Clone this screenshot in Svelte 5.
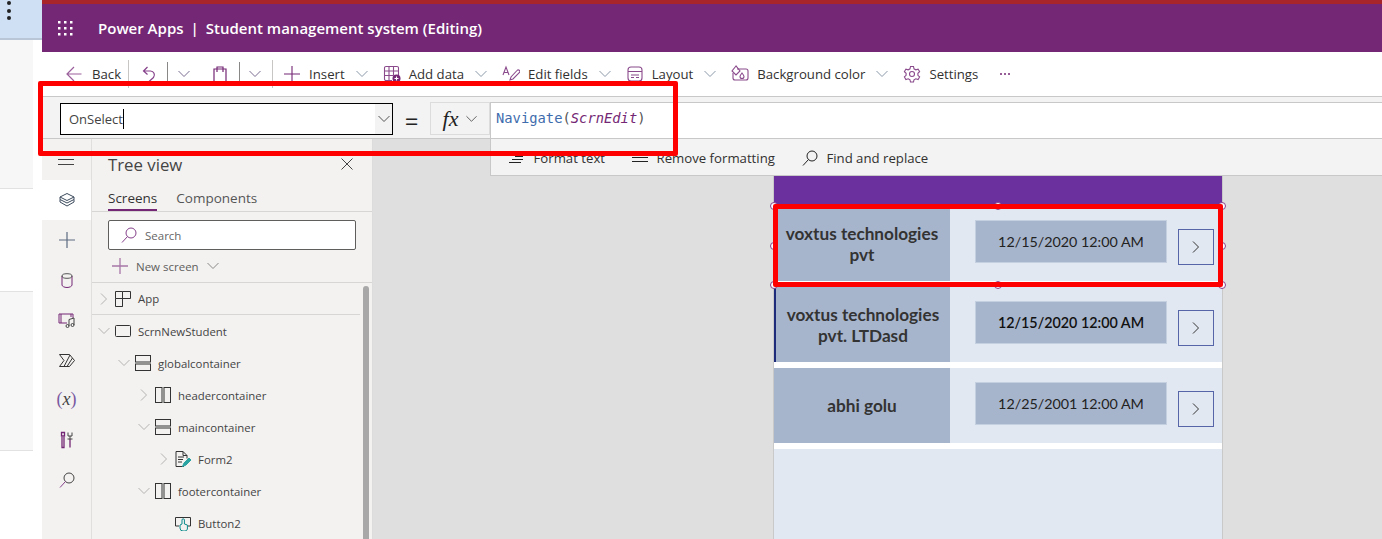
<script>
  const tools = [
    { id: "insert", label: "Insert", chev: true },
    { id: "data", label: "Add data", chev: true },
    { id: "fields", label: "Edit fields", chev: true },
    { id: "layout", label: "Layout", chev: true },
    { id: "bg", label: "Background color", chev: true },
    { id: "gear", label: "Settings", chev: false },
  ];

  const railIcons = ["layers", "plus", "db", "media", "flow", "var", "tools", "search"];

  const tree = [
    { name: "App", depth: 0, open: false, icon: "app", line: true },
    { name: "ScrnNewStudent", depth: 0, open: true, icon: "screen" },
    { name: "globalcontainer", depth: 1, open: true, icon: "rows" },
    { name: "headercontainer", depth: 2, open: false, icon: "cols" },
    { name: "maincontainer", depth: 2, open: true, icon: "rows" },
    { name: "Form2", depth: 3, open: false, icon: "form" },
    { name: "footercontainer", depth: 2, open: true, icon: "cols" },
    { name: "Button2", depth: 3, open: null, icon: "button" },
  ];

  const rows = [
    { name: ["voxtus technologies", "pvt"], date: "12/15/2020 12:00 AM" },
    { name: ["voxtus technologies", "pvt. LTDasd"], date: "12/15/2020 12:00 AM", current: true },
    { name: ["abhi golu"], date: "12/25/2001 12:00 AM" },
  ];

  const handles = [
    [0, 0], [50, 0], [100, 0], [0, 50], [100, 50], [0, 100], [50, 100], [100, 100],
  ];
</script>

{#snippet chevron(cls = "chev")}
  <svg class={cls} width="12" height="8" viewBox="0 0 12 8"><path d="M.5 1 6 6.5 11.500 1" fill="none" stroke="currentColor" /></svg>
{/snippet}

<div class="page">
  <aside class="strip">
    <div class="strip-top">
      <i></i><i></i><i></i>
    </div>
    <div class="strip-rows">
      <div class="s1"></div>
      <div class="s2"></div>
      <div class="s3"></div>
      <div class="s4"></div>
    </div>
  </aside>

  <div class="app">
    <header class="header">
      <svg width="16" height="16" viewBox="0 0 16 16" fill="#fff">
        {#each [1, 7, 13] as y}
          {#each [1, 7, 13] as x}
            <rect {x} {y} width="2.500" height="2.500" />
          {/each}
        {/each}
      </svg>
      <span class="title">Power Apps</span>
      <span class="pipe">|</span>
      <span class="title">Student management system (Editing)</span>
    </header>

    <div class="toolbar">
      <svg class="arrow" width="16" height="16" viewBox="0 0 16 16"><path d="M15.500 8H1M8 1 1 8l7 7" fill="none" stroke="#9b5f9b" stroke-width="1.200" /></svg>
      <span class="back">Back</span>
      <span class="sep tall first"></span>
      <svg class="undo" width="14" height="16" viewBox="0 0 14 16"><path d="M5.500 1 1.500 5l4 3.500M1.500 5h7a4 4 0 0 1 3 6.500L7 15.500" fill="none" stroke="#85408a" stroke-width="1.200" /></svg>
      <span class="sep"></span>
      {@render chevron("chev small")}
      <svg class="clip" width="14" height="18" viewBox="0 0 14 18"><path d="M1 17V4h12v13M4 4V7M10 4V7M4 4V2h6v2" fill="none" stroke="#742774" stroke-width="1.200" /></svg>
      <span class="sep"></span>
      {@render chevron("chev small")}
      <span class="sep tall last"></span>

      {#each tools as t}
        <div class="tool">
          <svg width="18" height="18" viewBox="0 0 18 18" fill="none" stroke="#8a4a8c" stroke-width="1.100">
            {#if t.id === "insert"}
              <path d="M9 1v16M1 9h16" stroke="#742774" />
            {:else if t.id === "data"}
              <path d="M3 1.500h11a1.500 1.500 0 0 1 1.500 1.500v7M9 15.500H3A1.500 1.500 0 0 1 1.500 14V3A1.500 1.500 0 0 1 3 1.500M1.500 6h14M1.500 10.500h9M6 1.500v14M10.500 1.500v9" />
              <circle cx="13.500" cy="13.500" r="4" fill="#742774" stroke="none" />
              <path d="M13.500 11.500v4M11.500 13.500h4" stroke="#fff" />
            {:else if t.id === "fields"}
              <path d="M1 10 4 2l3 8M2 7.500h4M8 15l1-3 6-6.500a1.500 1.500 0 0 1 2.500 2L11 14Z" />
            {:else if t.id === "layout"}
              <rect x="2" y="2" width="14" height="14" rx="3" />
              <path d="M2 6.500h14M5 10h8M5 12.500h3M10 12.500h3" />
            {:else if t.id === "bg"}
              <path d="M6 4h9a2 2 0 0 1 2 2v7a2 2 0 0 1-2 2H4a2 2 0 0 1-2-2V8" />
              <path d="M5 1 1 6l4 4 4-4ZM11 8s-2 2.500-2 3.500a2 2 0 0 0 4 0C13 10.500 11 8 11 8Z" />
            {:else}
              <path d="M7.500 1.500h3l.5 2.300 1.800 1 2.300-.7 1.500 2.600-1.700 1.600v2l1.700 1.600-1.500 2.600-2.300-.7-1.800 1-.5 2.200h-3l-.5-2.200-1.800-1-2.300.7-1.500-2.600 1.700-1.600v-2L1.400 6.700l1.500-2.600 2.300.7 1.800-1Z" />
              <circle cx="9" cy="9" r="2.500" />
            {/if}
          </svg>
          <span class="tool-label">{t.label}</span>
          {#if t.chev}{@render chevron()}{/if}
        </div>
      {/each}
      <span class="more"><i></i><i></i><i></i></span>
    </div>

    <div class="formula">
      <div class="prop-box">
        <span class="prop-value">OnSelect</span><span class="caret"></span>
        <span class="prop-drop">{@render chevron("chev dark")}</span>
      </div>
      <span class="equals">=</span>
      <div class="fx">
        <span class="fx-mark">fx</span>
        {@render chevron("chev dark")}
      </div>
      <div class="expr"><span class="fn">Navigate</span><span class="paren">(</span><span class="arg">ScrnEdit</span><span class="paren">)</span></div>
    </div>

    <div class="workspace">
      <nav class="rail">
        <svg class="burger" width="16" height="11" viewBox="0 0 16 11"><path d="M0 .5h16M0 5.500h16M0 10.500h16" stroke="#444" /></svg>
        {#each railIcons as ic, i}
          <div class="rail-item" class:active={i === 0}>
            {#if ic === "layers"}
              <svg width="16" height="16" viewBox="0 0 16 16" fill="none" stroke="#3c4a5c"><path d="M8 1.500 15 5l-7 3.500L1 5ZM1 5v2.500l7 3.500 7-3.500V5M1 7.500V10l7 4 7-4V7.500" /></svg>
            {:else if ic === "plus"}
              <svg width="16" height="16" viewBox="0 0 16 16"><path d="M8 0v16M0 8h16" stroke="#5c6a80" stroke-width="1.200" /></svg>
            {:else if ic === "db"}
              <svg width="12" height="15" viewBox="0 0 12 15" fill="none" stroke="#742774"><path d="M1 3v9c0 1.200 2.200 2.500 5 2.500s5-1.300 5-2.500V3" /><ellipse cx="6" cy="3" rx="5" ry="2.300" stroke="#555" /></svg>
            {:else if ic === "media"}
              <svg width="17" height="15" viewBox="0 0 17 15" fill="none" stroke="#444"><path d="M1 1h14v4M9 10H1V1M3 1v9M13 1v3" stroke="#742774" /><path d="M11 13V6.500l5-1.500v7" /><circle cx="9.500" cy="13" r="1.500" /><circle cx="14.500" cy="12" r="1.500" /></svg>
            {:else if ic === "flow"}
              <svg width="16" height="13" viewBox="0 0 16 13" fill="none" stroke="#333"><path d="M.5.500h10L15.500 6.500 10.500 12.500H.5L5 6.500ZM5 12.500 11 1M8 12.500 13.500 4" /></svg>
            {:else if ic === "var"}
              <span class="var">(<em>x</em>)</span>
            {:else if ic === "tools"}
              <svg width="14" height="18" viewBox="0 0 14 18" fill="none" stroke="#742774"><path d="M2 6V16.500h2V6M1.500 1.500h3V5h-3ZM10 8v8.500" stroke-width="1.300" /><path d="M8 1.500V5h4V1.500M10 5v3M7.500 8h5" stroke="#444" /></svg>
            {:else}
              <svg width="16" height="16" viewBox="0 0 16 16" fill="none"><circle cx="10" cy="6" r="5" stroke="#444" /><path d="M6.500 9.500 1 15.500" stroke="#85408a" /></svg>
            {/if}
          </div>
        {/each}
      </nav>

      <section class="tree">
        <div class="tree-head">
          <h2>Tree view</h2>
          <svg width="12" height="12" viewBox="0 0 12 12"><path d="M.5.500l11 11M11.500.500l-11 11" stroke="#444" /></svg>
        </div>
        <div class="tabs">
          <span class="tab on">Screens</span>
          <span class="tab">Components</span>
        </div>
        <div class="search">
          <svg width="16" height="16" viewBox="0 0 16 16" fill="none"><circle cx="10" cy="6" r="5" stroke="#85408a" /><path d="M6.500 9.500 1 15.500" stroke="#85408a" /></svg>
          <span>Search</span>
        </div>
        <div class="new-screen">
          <svg width="16" height="16" viewBox="0 0 16 16"><path d="M8 0v16M0 8h16" stroke="#a877a8" stroke-width="1.300" /></svg>
          <span>New screen</span>
          {@render chevron("chev grey")}
        </div>
        <div class="tree-list">
          {#each tree as node}
            <div class="node depth{node.depth}" class:line={node.line}>
              <span class="twist">
                {#if node.open === true}
                  {@render chevron("chev pale")}
                {:else if node.open === false}
                  <svg width="8" height="12" viewBox="0 0 8 12"><path d="M1 .5 6.500 6 1 11.500" fill="none" stroke="#b5b3b1" /></svg>
                {/if}
              </span>
              <svg class="node-icon" width="16" height="16" viewBox="0 0 16 16" fill="none" stroke="#333">
                {#if node.icon === "app"}
                  <path d="M.5 7.500h7V15.500H.5ZM7.500.5h8v7h-8ZM.5 7.500v-7h7M7.500 15.500V7.500" />
                {:else if node.icon === "screen"}
                  <rect x=".5" y="2.500" width="15" height="11" rx="1" />
                {:else if node.icon === "rows"}
                  <rect x=".5" y=".5" width="15" height="6.500" /><rect x=".5" y="9" width="15" height="6.500" />
                {:else if node.icon === "cols"}
                  <rect x=".5" y=".5" width="6.500" height="15" /><rect x="9" y=".5" width="6.500" height="15" />
                {:else if node.icon === "form"}
                  <path d="M9 15.500H1V.5h7l4 4v3M8 .5v4h4M3 6h6M3 8.500h5M3 11h4" />
                  <path d="M7.500 15.500 9 12l5-5 2 2-5 5Z" fill="#2aa3a3" stroke="#2aa3a3" />
                {:else}
                  <path d="M4 11H.5V2.500h15V11H13" />
                  <path d="M7 9V5a1.200 1.200 0 0 1 2.400 0v4l3 1v4a2.500 2.500 0 0 1-2.500 2H8a3 3 0 0 1-3-3v-3Z" stroke="#0b8a8a" fill="#f3f2f1" />
                {/if}
              </svg>
              <span class="node-name">{node.name}</span>
            </div>
          {/each}
          <div class="scroll-thumb"></div>
        </div>
      </section>

      <main class="canvas">
        <div class="format-bar">
          <div class="fmt">
            <svg width="16" height="12" viewBox="0 0 16 12"><path d="M3 1.500h13M6 4.500h8M3 7.500h11M0 10.500h12" stroke="#222" /></svg>
            <span>Format text</span>
          </div>
          <div class="fmt">
            <svg width="16" height="12" viewBox="0 0 16 12"><path d="M0 1.500h16M0 5.500h16M0 9.500h16" stroke="#222" /></svg>
            <span>Remove formatting</span>
          </div>
          <div class="fmt">
            <svg width="16" height="16" viewBox="0 0 16 16" fill="none"><circle cx="10" cy="6" r="5" stroke="#222" /><path d="M6.500 9.500 1 15.500" stroke="#222" /></svg>
            <span>Find and replace</span>
          </div>
        </div>

        <div class="screen">
          <div class="band"></div>
          <div class="gallery">
            {#each rows as r}
              <div class="row" class:current={r.current}>
                <div class="name">
                  {#each r.name as line}<span>{line}</span>{/each}
                </div>
                <div class="date">{r.date}</div>
                <div class="go">
                  <svg width="8" height="12" viewBox="0 0 8 12"><path d="M1 .5 6.500 6 1 11.500" fill="none" stroke="#333" /></svg>
                </div>
              </div>
            {/each}
            <div class="handles">
              {#each handles as [x, y]}
                <i style="left:{x}%;top:{y}%"></i>
              {/each}
            </div>
          </div>
        </div>
      </main>
    </div>
  </div>

  <div class="mark mark-formula"></div>
  <div class="mark mark-row"></div>
</div>

<style>
  :global(body) {
    margin: 0;
    background: #fff;
  }
  .page {
    position: relative;
    display: flex;
    width: 1382px;
    height: 539px;
    overflow: hidden;
    font-family: "Open Sans", "Noto Sans", sans-serif;
    font-size: 12.500px;
    color: #3b3a39;
  }

  /* host page behind the studio */
  .strip {
    width: 42px;
    flex: none;
  }
  .strip-top {
    height: 38px;
    background: #cfe0f5;
    border-bottom: 2px solid #b9c6d8;
    position: relative;
  }
  .strip-top i {
    display: block;
    width: 4px;
    height: 4px;
    border-radius: 50%;
    background: #222;
    margin-left: 7px;
    margin-bottom: 3.500px;
    position: relative;
    top: 1px;
  }
  .strip-rows {
    width: 33px;
  }
  .strip-rows div {
    border-bottom: 1px solid #e2e2e2;
  }
  .s1 { height: 148px; background: #f7f7f7; }
  .s2 { height: 102px; background: #fff; }
  .s3 { height: 158px; background: #f7f7f7; }
  .s4 { height: 88px; background: #fff; border: 0 !important; }

  .app {
    flex: 1;
    display: flex;
    flex-direction: column;
    min-width: 0;
  }
  .header {
    height: 48px;
    box-sizing: content-box;
    border-top: 4px solid #a8262a;
    background: #742774;
    color: #fff;
    display: flex;
    align-items: center;
    padding-left: 15px;
    font-size: 15px;
  }
  .header svg {
    margin-right: 25px;
  }
  .title {
    font-weight: 600;
  }
  .pipe {
    margin: 0 7px;
    font-weight: 600;
  }

  .toolbar {
    height: 44px;
    background: #fff;
    display: flex;
    align-items: center;
    padding-left: 24px;
    font-size: 13.200px;
    color: #323130;
  }
  .back { margin-left: 10px; }
  .undo { margin-left: 4px; }
  .sep {
    width: 1px;
    height: 24px;
    background: #8a8886;
    margin: 0 9px;
  }
  .sep.tall {
    height: 28px;
    background: #c8c6c4;
  }
  .sep.first { margin-left: 7px; }
  .sep.last { margin-right: 10px; margin-left: 11px; }
  .undo + .sep { margin-left: 11px; margin-right: 10px; }
  .clip { margin-left: 23px; margin-right: 3px; }
  .tool {
    display: flex;
    align-items: center;
    gap: 8px;
    margin-right: 15px;
  }
  .tool .chev { margin-left: 3px; }
  .chev {
    color: #8a98a8;
    flex: none;
  }
  .chev.small { color: #7a6a90; }
  .chev.dark { color: #555; }
  .chev.grey { color: #8a8886; }
  .chev.pale { color: #b5b3b1; }
  .more {
    display: flex;
    gap: 2px;
    margin-left: 7px;
  }
  .more i {
    width: 2px;
    height: 2px;
    background: #742774;
    border-radius: 50%;
  }

  .formula {
    height: 41px;
    background: #f3f3f3;
    border-top: 1px solid #c8c8c8;
    border-bottom: 1px solid #c8c8c8;
    box-sizing: content-box;
    display: flex;
    position: relative;
    align-items: flex-start;
  }
  .prop-box {
    margin: 6px 0 0 18px;
    width: 323px;
    height: 30px;
    border: 1px solid #000;
    background: #fff;
    display: flex;
    align-items: center;
    padding-left: 8px;
    box-sizing: content-box;
    font-size: 13px;
    color: #444;
  }
  .caret {
    width: 1px;
    height: 20px;
    background: #000;
    margin-left: 0;
  }
  .prop-drop {
    margin-left: auto;
    width: 17px;
    height: 100%;
    background: #f3f3f3;
    display: flex;
    align-items: center;
    justify-content: center;
  }
  .equals {
    width: 37px;
    text-align: center;
    font-size: 24px;
    line-height: 20px;
    margin-top: 14px;
    color: #222;
  }
  .fx {
    width: 58px;
    height: 31px;
    margin-top: 5px;
    padding-left: 0;
    border: 1px solid #dcdcdc;
    box-sizing: content-box;
    display: flex;
    align-items: center;
    justify-content: center;
    gap: 8px;
  }
  .fx .chev { width: 11px; }
  .fx-mark {
    font-family: "Liberation Serif", serif;
    font-style: italic;
    font-size: 22px;
    color: #222;
  }
  .expr {
    flex: 1;
    height: 35px;
    margin-top: 5px;
    background: #fff;
    border-top: 1px solid #c8c8c8;
    border-left: 1px solid #c8c8c8;
    line-height: 31px;
    padding-left: 5px;
    font-family: "DejaVu Sans Mono", monospace;
    font-size: 13.800px;
  }
  .fn { color: #3f6cad; }
  .paren { color: #555; }
  .arg { color: #742774; font-style: italic; }

  .workspace {
    flex: 1;
    display: flex;
    min-height: 0;
  }
  .rail {
    width: 49px;
    flex: none;
    background: #f3f2f1;
    border-right: 1px solid #e1dfdd;
    display: flex;
    flex-direction: column;
    align-items: stretch;
  }
  .burger {
    display: block;
    margin: 15px 0 15px 16px;
  }
  .rail-item {
    height: 40px;
    display: flex;
    align-items: center;
    justify-content: center;
    flex: none;
  }
  .rail-item.active { background: #fff; }
  .var {
    font-family: "Liberation Serif", serif;
    font-size: 18px;
    line-height: 18px;
    margin-top: -2px;
    color: #7a5aa0;
  }
  .var em { color: #444; }

  .tree {
    width: 280px;
    flex: none;
    background: #f3f2f1;
    border-right: 1px solid #dcdcdc;
    display: flex;
    flex-direction: column;
  }
  .tree-head {
    display: flex;
    align-items: center;
    justify-content: space-between;
    padding: 13px 19px 0 16px;
    height: 24px;
  }
  h2 {
    margin: 0;
    font-size: 16.800px;
    font-weight: 400;
    color: #444;
  }
  .tabs {
    display: flex;
    gap: 19px;
    padding: 14px 0 0 16px;
    height: 21px;
    border-bottom: 1px solid #d8d6d4;
    font-size: 13.500px;
  }
  .tab {
    color: #555;
    line-height: 16px;
    height: 19px;
  }
  .tab.on {
    color: #333;
    border-bottom: 2px solid #742774;
  }
  .search {
    margin: 8px 16px 0;
    height: 28px;
    border: 1px solid #605e5c;
    border-radius: 2px;
    background: #fff;
    display: flex;
    align-items: center;
    gap: 8px;
    padding-left: 12px;
    font-size: 11.500px;
    color: #666;
  }
  .new-screen {
    display: flex;
    align-items: center;
    gap: 8px;
    padding-left: 20px;
    height: 32px;
    font-size: 11.500px;
    color: #605e5c;
    border-bottom: 1px solid #d8d6d4;
  }
  .tree-list {
    position: relative;
    flex: 1;
    font-size: 11.400px;
    color: #444;
  }
  .node {
    height: 32px;
    display: flex;
    align-items: center;
    box-sizing: border-box;
    margin-right: 12px;
  }
  .node.line { border-bottom: 1px solid #d8d6d4; }
  .depth0 { padding-left: 6px; }
  .depth1 { padding-left: 26px; }
  .depth2 { padding-left: 46px; }
  .depth3 { padding-left: 66px; }
  .twist {
    width: 12px;
    flex: none;
    display: flex;
    justify-content: center;
  }
  .node-icon {
    margin: 0 7px 0 5px;
    flex: none;
  }
  .scroll-thumb {
    position: absolute;
    right: 3px;
    top: 3px;
    width: 6px;
    bottom: 0;
    border-radius: 3px 3px 0 0;
    background: #a8a8a8;
  }

  .canvas {
    flex: 1;
    background: #dfdfdf;
    display: flex;
    flex-direction: column;
    min-width: 0;
  }
  .format-bar {
    margin-left: 117px;
    height: 35px;
    padding-top: 1px;
    background: #f3f3f3;
    border-left: 1px solid #c8c8c8;
    border-bottom: 1px solid #c8c8c8;
    display: flex;
    align-items: center;
    padding-left: 18px;
    gap: 27px;
    font-size: 13.200px;
    color: #323130;
  }
  .fmt {
    display: flex;
    align-items: center;
    gap: 8.500px;
  }
  .screen {
    margin-left: 401px;
    width: 448px;
    flex: 1;
    background: #e2e8f2;
    box-shadow: 1px 0 0 #c9c9c9, -1px 0 0 #c9c9c9;
  }
  .band {
    height: 30px;
    background: #6b2f9e;
  }
  .gallery {
    position: relative;
    height: 243px;
  }
  .row {
    height: 81px;
    box-sizing: border-box;
    border-bottom: 6px solid #fff;
    display: flex;
    align-items: flex-start;
    font-family: Lato, sans-serif;
    color: #333;
  }
  .row.current .name { border-left: 2px solid #1e2a7a; }
  .row.current .date { font-weight: 600; color: #111; }
  .name {
    width: 176px;
    height: 100%;
    box-sizing: border-box;
    background: #a7b5cc;
    display: flex;
    flex-direction: column;
    align-items: center;
    justify-content: center;
    font-weight: 700;
    font-size: 17.200px;
    line-height: 21px;
  }
  .date {
    width: 192px;
    height: 43px;
    margin: 14px 0 0 25px;
    background: #a7b5cc;
    border: 1px solid #c4cfe0;
    box-sizing: border-box;
    display: flex;
    align-items: center;
    justify-content: center;
    font-size: 14.300px;
    color: #222;
  }
  .go {
    width: 36px;
    height: 36px;
    margin: 23px 0 0 11px;
    box-sizing: border-box;
    border: 1px solid #5664a8;
    display: flex;
    align-items: center;
    justify-content: center;
  }
  .handles {
    position: absolute;
    left: 0;
    top: 0;
    width: 448px;
    height: 79px;
    pointer-events: none;
  }
  .handles i {
    position: absolute;
    width: 8px;
    height: 8px;
    margin: -4px 0 0 -4px;
    border-radius: 50%;
    background: #fff;
    border: 1px solid #85408a;
    box-sizing: border-box;
  }

  /* red annotation boxes */
  .mark {
    position: absolute;
    border: 5px solid #f00;
    border-radius: 2px;
    box-sizing: border-box;
    pointer-events: none;
  }
  .mark-formula {
    left: 38px;
    top: 81px;
    width: 640px;
    height: 75px;
  }
  .mark-row {
    left: 773px;
    top: 204px;
    width: 450px;
    height: 83px;
  }
</style>
